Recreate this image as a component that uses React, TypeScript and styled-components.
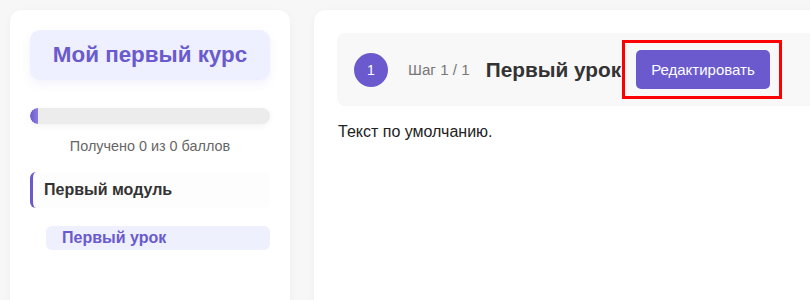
import React from 'react'
import styled, { createGlobalStyle } from 'styled-components'

const GlobalStyle = createGlobalStyle`
  body {
    margin: 0;
    background: #f7f7f7;
    font-family: "Liberation Sans", Arial, sans-serif;
    overflow: hidden;
  }
`

const Page = styled.div`
  display: flex;
  align-items: flex-start;
  gap: 24px;
  padding: 10px;
`

const Sidebar = styled.aside`
  flex-shrink: 0;
  box-sizing: border-box;
  width: 280px;
  min-height: 400px;
  padding: 20px;
  background: #fff;
  border-radius: 12px;
  box-shadow: 0 2px 8px rgba(0, 0, 0, 0.04);
`

const CourseTitle = styled.h1`
  margin: 0;
  height: 50px;
  display: flex;
  align-items: center;
  justify-content: center;
  background: #eef0ff;
  border-radius: 10px;
  box-shadow: 0 4px 10px rgba(106, 90, 205, 0.08);
  color: #6a5acd;
  font-size: 22.4px;
  font-weight: 700;
`

const Progress = styled.div`
  margin-top: 28px;
  height: 16px;
  background: #ececec;
  border-radius: 8px;
  overflow: hidden;
  box-shadow: 0 2px 6px rgba(0, 0, 0, 0.05);
`

const ProgressFill = styled.div`
  height: 100%;
  background: linear-gradient(90deg, #6a5acd, #8b7be0);
  border-radius: 8px 0 0 8px;
`

const Score = styled.div`
  margin-top: 14px;
  text-align: center;
  color: #666;
  font-size: 14.4px;
  line-height: 16px;
`

const ModuleItem = styled.div`
  margin-top: 18px;
  height: 36px;
  display: flex;
  align-items: center;
  padding-left: 11px;
  border-left: 3px solid #6a5acd;
  border-radius: 6px;
  background: #fdfdfd;
  color: #333;
  font-size: 16px;
  font-weight: 700;
`

const LessonItem = styled.div<{ $active?: boolean }>`
  margin: 18px 0 0 16px;
  height: 24px;
  display: flex;
  align-items: center;
  padding-left: 16px;
  border-radius: 6px;
  background: ${({ $active }) => ($active ? '#eef0fd' : 'transparent')};
  color: #6a5acd;
  font-size: 16px;
  font-weight: 700;
`

const Main = styled.main`
  flex-shrink: 0;
  box-sizing: border-box;
  width: 800px;
  min-height: 400px;
  padding: 23px;
  background: #fff;
  border-radius: 12px;
  box-shadow: 0 2px 8px rgba(0, 0, 0, 0.04);
`

const StepHeader = styled.div`
  height: 73px;
  display: flex;
  align-items: center;
  padding: 0 17px;
  background: #f8f8f8;
  border-radius: 8px;
`

const StepBadge = styled.div`
  width: 34px;
  height: 34px;
  border-radius: 50%;
  display: flex;
  align-items: center;
  justify-content: center;
  background: #6a5acd;
  color: #fff;
  font-size: 14px;
`

const StepCounter = styled.span`
  margin-left: 20px;
  color: #777;
  font-size: 15.2px;
`

const StepTitle = styled.h2`
  margin: 0 0 0 16px;
  color: #333;
  font-size: 20.8px;
  font-weight: 700;
`

const Highlight = styled.div`
  position: relative;
  margin-left: 15px;
  &::after {
    content: '';
    position: absolute;
    top: -10px;
    bottom: -10px;
    left: -14px;
    right: -12px;
    border: 3px solid #f00;
    pointer-events: none;
  }
`

const EditButton = styled.button`
  display: block;
  height: 39px;
  padding: 0 15px;
  border: none;
  border-radius: 5px;
  background: #6a5acd;
  color: #fff;
  font-family: inherit;
  font-size: 15px;
  cursor: pointer;
`

const Body = styled.p`
  margin: 17px 0 0 1px;
  color: #222;
  font-size: 16px;
`

export default function App() {
  const earned = 0
  const total = 0
  const pct = total ? (earned / total) * 100 : 0

  return (
    <>
      <GlobalStyle />
      <Page>
        <Sidebar>
          <CourseTitle>Мой первый курс</CourseTitle>
          <Progress>
            <ProgressFill style={{ width: pct ? `${pct}%` : '8px' }} />
          </Progress>
          <Score>
            Получено {earned} из {total} баллов
          </Score>
          <ModuleItem>Первый модуль</ModuleItem>
          <LessonItem $active>Первый урок</LessonItem>
        </Sidebar>
        <Main>
          <StepHeader>
            <StepBadge>1</StepBadge>
            <StepCounter>Шаг 1 / 1</StepCounter>
            <StepTitle>Первый урок</StepTitle>
            <Highlight>
              <EditButton>Редактировать</EditButton>
            </Highlight>
          </StepHeader>
          <Body>Текст по умолчанию.</Body>
        </Main>
      </Page>
    </>
  )
}
